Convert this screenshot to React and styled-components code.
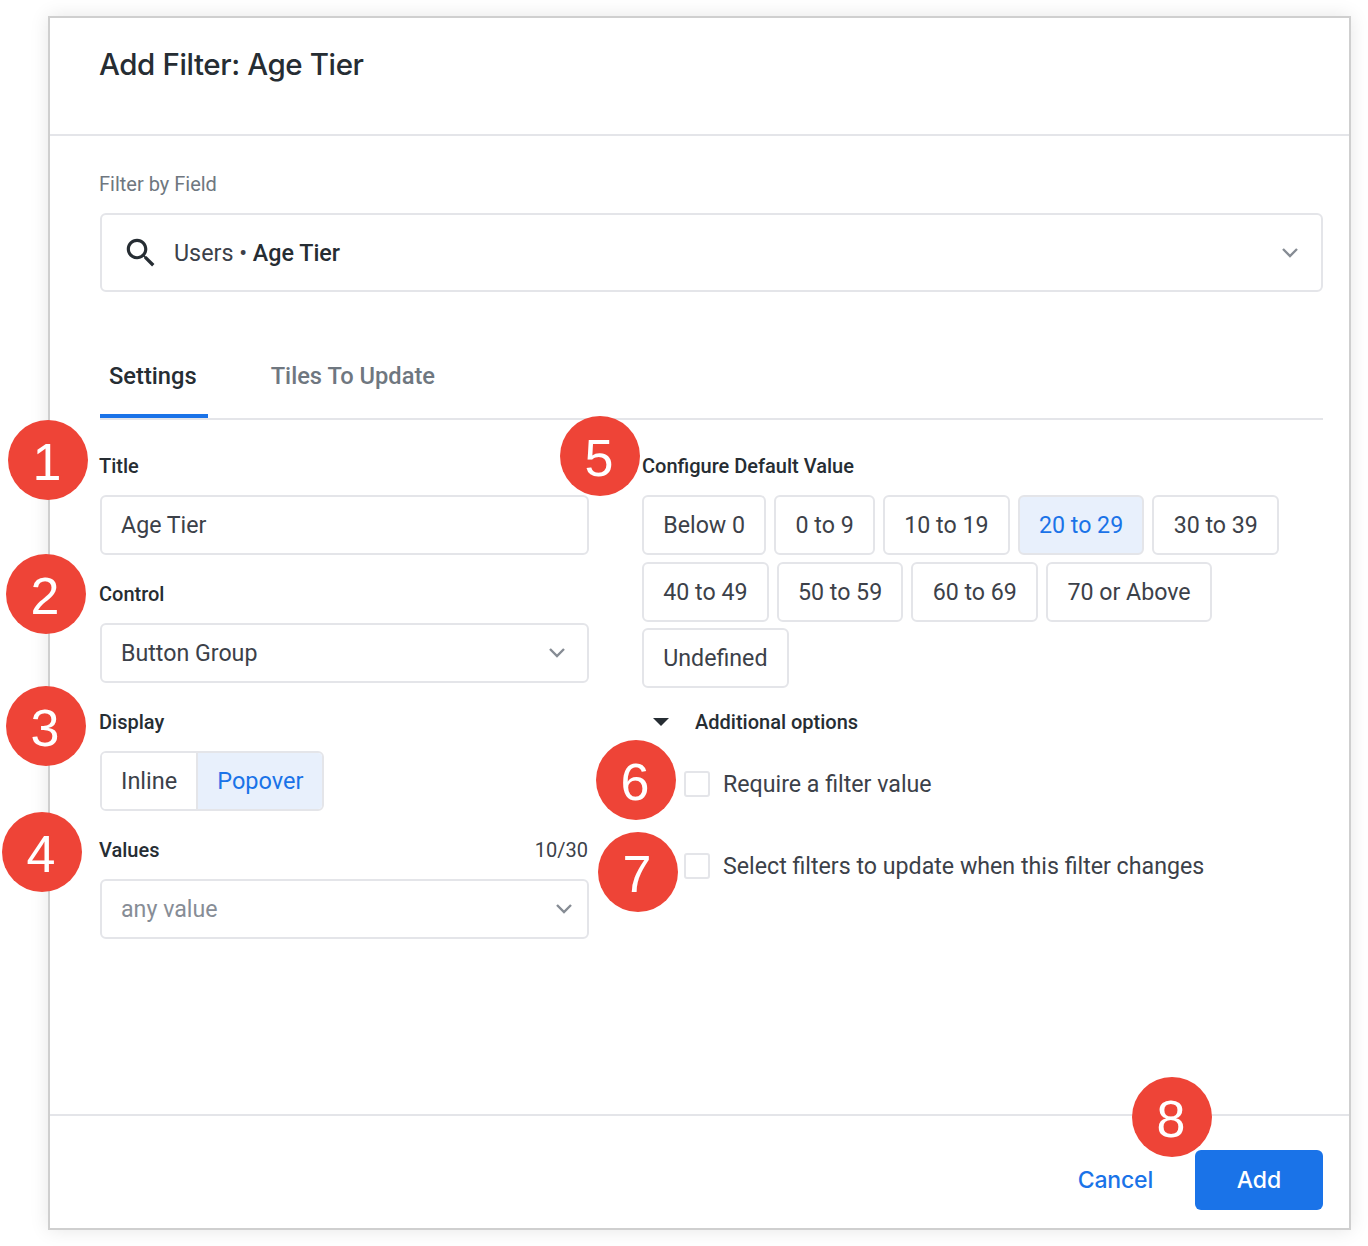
import React from 'react'
import styled, { createGlobalStyle } from 'styled-components'

const GlobalStyle = createGlobalStyle`
    html, body {
        margin: 0;
        padding: 0;
        background: #fff;
    }
    * {
        box-sizing: border-box;
    }
`

const Page = styled.div`
    position: relative;
    width: 1368px;
    height: 1246px;
    padding: 16px 17px 16px 48px;
    font-family: Roboto, 'Liberation Sans', sans-serif;
    color: #3c4149;
    overflow: hidden;
`

const Dialog = styled.div`
    display: flex;
    flex-direction: column;
    height: 1214px;
    background: #fff;
    border: 2px solid #cfcfcf;
    box-shadow: 0 0 18px rgba(0, 0, 0, 0.1);
`

const Header = styled.div`
    height: 118px;
    padding: 26px 49px 0;
    border-bottom: 2px solid #e4e5e9;
    flex-shrink: 0;
`

const Heading = styled.h1`
    margin: 0;
    font-family: Inter, Roboto, sans-serif;
    font-size: 29.5px;
    line-height: 40px;
    font-weight: 500;
    letter-spacing: -0.4px;
    color: #262d33;
`

const Body = styled.div`
    flex: 1;
    padding: 36px 26px 0 50px;
`

const FieldLabel = styled.div`
    margin-left: -1px;
    font-size: 20px;
    line-height: 24px;
    color: #6f7780;
`

const FieldBox = styled.div`
    display: flex;
    align-items: center;
    height: 79px;
    margin-top: 17px;
    padding: 0 21px 0 20px;
    border: 2px solid #e4e5e9;
    border-radius: 6px;
    font-size: 23.3px;
    color: #3c4149;
`

const SearchIcon = styled.svg`
    width: 38px;
    height: 38px;
    fill: #262d33;
    margin-right: 14px;
`

const FieldName = styled.span`
    flex: 1;
    b {
        font-weight: 500;
        color: #262d33;
    }
`

const Chevron = styled.svg`
    width: 20px;
    height: 12px;
    fill: none;
    stroke: #868c94;
    stroke-width: 2.4;
    flex-shrink: 0;
`

const Tabs = styled.div`
    display: flex;
    height: 100px;
    margin-top: 28px;
    gap: 54px;
    border-bottom: 2px solid #e4e5e9;
`

const Tab = styled.div`
    display: flex;
    align-items: center;
    height: 98px;
    padding: 18px 11px 0 9px;
    font-size: 23.7px;
    font-weight: 500;
    color: ${(props) => (props.$active ? '#262d33' : '#6f7780')};
    border-bottom: 4px solid ${(props) => (props.$active ? '#1a73e8' : 'transparent')};
`

const Columns = styled.div`
    display: flex;
    gap: 53px;
    margin-top: 33px;
`

const LeftColumn = styled.div`
    display: flex;
    flex-direction: column;
    gap: 26px;
    width: 489px;
    flex-shrink: 0;
`

const RightColumn = styled.div`
    flex: 1;
`

const LabelRow = styled.div`
    display: flex;
    justify-content: space-between;
    height: 26px;
    margin-bottom: 16px;
    font-size: 20px;
    line-height: 26px;
    font-weight: 500;
    color: #262d33;
`

const Field = styled.div`
    display: flex;
    flex-direction: column;

    ${LabelRow} {
        margin-left: -1px;
        margin-right: 1px;
    }
`

const Count = styled.span`
    font-weight: 400;
    color: #3c4149;
`

const Input = styled.div`
    display: flex;
    align-items: center;
    justify-content: space-between;
    height: 60px;
    padding: 0 ${(props) => props.$right || 20}px 0 19px;
    border: 2px solid #e4e5e9;
    border-radius: 6px;
    font-size: 23.2px;
    color: ${(props) => (props.$placeholder ? '#878d96' : '#3c4149')};
`

const Toggle = styled.div`
    display: inline-flex;
    align-self: flex-start;
    height: 60px;
    border: 2px solid #e4e5e9;
    border-radius: 6px;
    overflow: hidden;
`

const ToggleItem = styled.div`
    display: flex;
    align-items: center;
    padding: 0 19px;
    font-size: 23.5px;
    color: ${(props) => (props.$active ? '#1a73e8' : '#3c4149')};
    background: ${(props) => (props.$active ? '#e8f0fc' : '#fff')};
    border-left: ${(props) => (props.$active ? '2px solid #e4e5e9' : 'none')};
`

const OptionGrid = styled.div`
    display: flex;
    flex-wrap: wrap;
    gap: 6.5px 8px;
    width: 660px;
`

const Option = styled.div`
    display: flex;
    align-items: center;
    height: 60px;
    padding: 0 19.25px;
    border: 2px solid #e4e5e9;
    border-radius: 6px;
    font-size: 23.2px;
    color: ${(props) => (props.$active ? '#1a73e8' : '#3c4149')};
    background: ${(props) => (props.$active ? '#e8f0fc' : '#fff')};
`

const Disclosure = styled.div`
    display: flex;
    align-items: center;
    height: 26px;
    margin-top: 21px;
    padding-left: 11px;
    font-size: 20px;
    font-weight: 500;
    color: #262d33;
`

const Triangle = styled.span`
    width: 0;
    height: 0;
    margin-right: 26px;
    border-left: 8px solid transparent;
    border-right: 8px solid transparent;
    border-top: 8px solid #262d33;
`

const CheckRow = styled.div`
    display: flex;
    align-items: center;
    height: 28px;
    margin-top: ${(props) => props.$top}px;
    padding-left: 42px;
    font-size: 23.2px;
    color: #3c4149;
`

const CheckBox = styled.span`
    width: 26px;
    height: 26px;
    margin-right: 13px;
    border: 2px solid #e4e5e9;
    border-radius: 3px;
    background: #fff;
`

const Footer = styled.div`
    display: flex;
    align-items: center;
    justify-content: flex-end;
    gap: 42px;
    height: 114px;
    padding: 16px 26px 0 0;
    border-top: 2px solid #e4e5e9;
    flex-shrink: 0;
`

const CancelLink = styled.span`
    font-family: Inter, Roboto, sans-serif;
    font-size: 23px;
    font-weight: 500;
    letter-spacing: -0.2px;
    color: #1a73e8;
`

const AddButton = styled.button`
    width: 128px;
    height: 60px;
    border: none;
    border-radius: 6px;
    background: #1a73e8;
    color: #fff;
    font-family: Inter, Roboto, sans-serif;
    font-size: 23px;
    font-weight: 500;
`

const Badge = styled.div`
    position: absolute;
    left: ${(props) => props.$x - 40}px;
    top: ${(props) => props.$y - 40}px;
    display: flex;
    align-items: center;
    justify-content: center;
    width: 80px;
    height: 80px;
    padding: 4px 2px 0 0;
    border-radius: 50%;
    background: #ee4437;
    color: #fff;
    font-family: 'Liberation Sans', Arial, sans-serif;
    font-size: 52px;
`

const options = [
    'Below 0',
    '0 to 9',
    '10 to 19',
    '20 to 29',
    '30 to 39',
    '40 to 49',
    '50 to 59',
    '60 to 69',
    '70 or Above',
    'Undefined',
]

const badges = [
    { n: 1, x: 48, y: 460 },
    { n: 2, x: 46, y: 594 },
    { n: 3, x: 46, y: 726 },
    { n: 4, x: 42, y: 852 },
    { n: 5, x: 600, y: 456 },
    { n: 6, x: 636, y: 780 },
    { n: 7, x: 638, y: 872 },
    { n: 8, x: 1172, y: 1117 },
]

const Down = () => (
    <Chevron viewBox='0 0 20 12'>
        <path d='M3 2l7 7 7-7' />
    </Chevron>
)

const App = () => {
    return (
        <Page>
            <GlobalStyle />
            <Dialog>
                <Header>
                    <Heading>Add Filter: Age Tier</Heading>
                </Header>
                <Body>
                    <FieldLabel>Filter by Field</FieldLabel>
                    <FieldBox>
                        <SearchIcon viewBox='0 0 24 24'>
                            <path d='M15.5 14h-.79l-.28-.27C15.41 12.59 16 11.11 16 9.5 16 5.91 13.09 3 9.5 3S3 5.91 3 9.5 5.91 16 9.5 16c1.61 0 3.09-.59 4.23-1.57l.27.28v.79l5 4.99L20.49 19l-4.99-5zm-6 0C7.01 14 5 11.99 5 9.5S7.01 5 9.5 5 14 7.01 14 9.5 11.99 14 9.5 14z' />
                        </SearchIcon>
                        <FieldName>
                            Users • <b>Age Tier</b>
                        </FieldName>
                        <Down />
                    </FieldBox>
                    <Tabs>
                        <Tab $active>Settings</Tab>
                        <Tab>Tiles To Update</Tab>
                    </Tabs>
                    <Columns>
                        <LeftColumn>
                            <Field>
                                <LabelRow>Title</LabelRow>
                                <Input>Age Tier</Input>
                            </Field>
                            <Field>
                                <LabelRow>Control</LabelRow>
                                <Input $right={20}>
                                    Button Group
                                    <Down />
                                </Input>
                            </Field>
                            <Field>
                                <LabelRow>Display</LabelRow>
                                <Toggle>
                                    <ToggleItem>Inline</ToggleItem>
                                    <ToggleItem $active>Popover</ToggleItem>
                                </Toggle>
                            </Field>
                            <Field>
                                <LabelRow>
                                    Values
                                    <Count>10/30</Count>
                                </LabelRow>
                                <Input $placeholder $right={13}>
                                    any value
                                    <Down />
                                </Input>
                            </Field>
                        </LeftColumn>
                        <RightColumn>
                            <LabelRow>Configure Default Value</LabelRow>
                            <OptionGrid>
                                {options.map((o) => (
                                    <Option key={o} $active={o === '20 to 29'}>
                                        {o}
                                    </Option>
                                ))}
                            </OptionGrid>
                            <Disclosure>
                                <Triangle />
                                Additional options
                            </Disclosure>
                            <CheckRow $top={35}>
                                <CheckBox />
                                Require a filter value
                            </CheckRow>
                            <CheckRow $top={54}>
                                <CheckBox />
                                Select filters to update when this filter changes
                            </CheckRow>
                        </RightColumn>
                    </Columns>
                </Body>
                <Footer>
                    <CancelLink>Cancel</CancelLink>
                    <AddButton>Add</AddButton>
                </Footer>
            </Dialog>
            {badges.map((b) => (
                <Badge key={b.n} $x={b.x} $y={b.y}>
                    {b.n}
                </Badge>
            ))}
        </Page>
    )
}

export default App
